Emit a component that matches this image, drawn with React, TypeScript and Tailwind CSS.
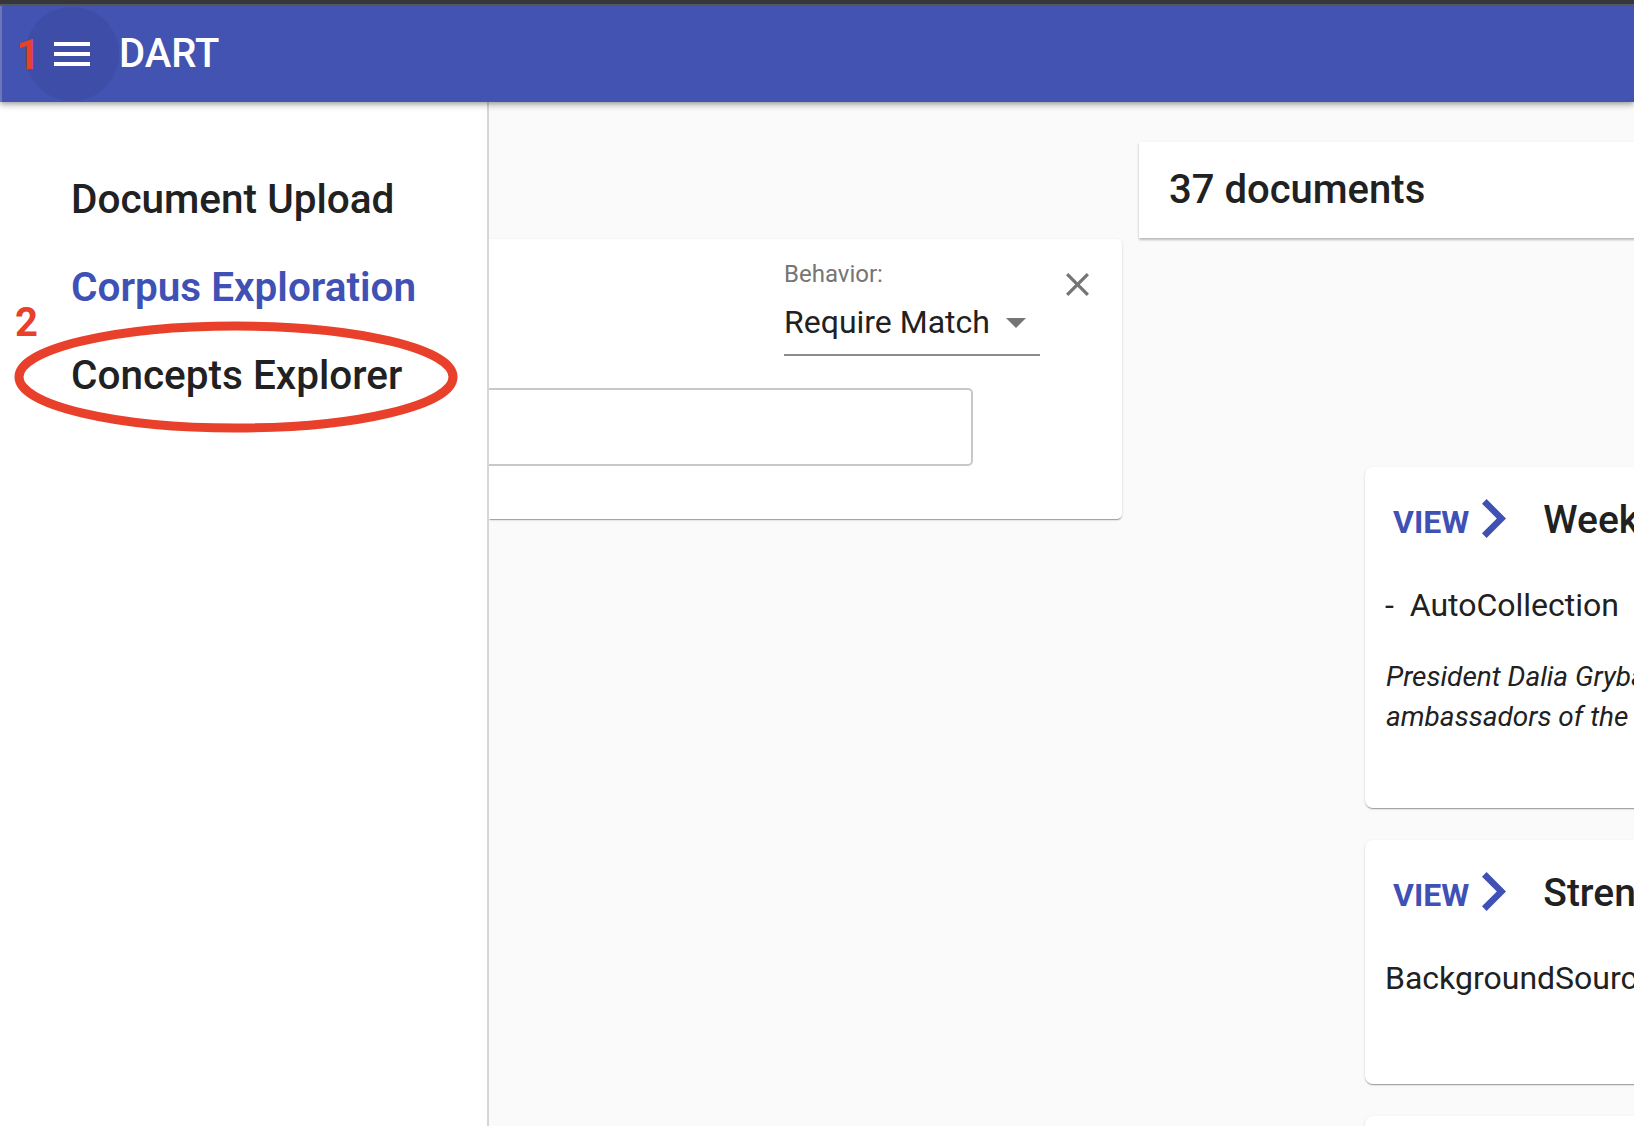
// App.tsx – DART corpus exploration with nav drawer open
import React from "react";

/* ---------- Icons (MUI paths) ---------- */
function MenuIcon() {
  return (
    <svg width="36" height="24" viewBox="3 6 18 12" fill="#ffffff">
      <path d="M3 18h18v-2H3zm0-5h18v-2H3zm0-7v2h18V6z" />
    </svg>
  );
}

function CloseIcon() {
  return (
    <svg width="23" height="23" viewBox="5 5 14 14" fill="#757575">
      <path d="M19 6.41 17.59 5 12 10.59 6.41 5 5 6.41 10.59 12 5 17.59 6.41 19 12 13.41 17.59 19 19 17.59 13.41 12z" />
    </svg>
  );
}

function ArrowDropDown() {
  return (
    <svg width="20" height="10" viewBox="7 10 10 5" fill="#757575">
      <path d="M7 10l5 5 5-5z" />
    </svg>
  );
}

function Chevron() {
  return (
    <svg width="24" height="39" viewBox="8.59 6 7.41 12" fill="#3f51b5">
      <path d="M10 6 8.59 7.41 13.17 12l-4.58 4.59L10 18l6-6z" />
    </svg>
  );
}

/* ---------- Types ---------- */
interface Doc {
  id: string;
  title: string;
  source: string;
  snippet?: string[];
  pb: string;
}

const docs: Doc[] = [
  {
    id: "d1",
    title: "Weekly Review of the President's Activities",
    source: "-  AutoCollection",
    snippet: [
      "President Dalia Grybauskaitė received the credentials of new",
      "ambassadors of the Republic of Lithuania in the Presidential Palace",
    ],
    pb: "pb-[71px]",
  },
  {
    id: "d2",
    title: "Strengthening Regional Security Cooperation",
    source: "BackgroundSource",
    pb: "pb-[86px]",
  },
  {
    id: "d3",
    title: "Defence Ministers Meeting",
    source: "AutoCollection",
    pb: "pb-[86px]",
  },
];

const menu = [
  { label: "Document Upload", active: false },
  { label: "Corpus Exploration", active: true },
  { label: "Concepts Explorer", active: false },
];

/* ---------- Component ---------- */
export default function App() {
  return (
    <div className="h-screen w-screen overflow-hidden flex flex-col bg-[#fafafa] font-['Roboto',sans-serif] text-[#212121]">
      {/* browser chrome strip */}
      <div className="h-[4px] bg-[#37383c] shrink-0" />
      <div className="h-[2px] bg-[#5a5b5e] shrink-0" />

      {/* App bar */}
      <header className="relative z-20 h-[96px] shrink-0 flex items-center pl-[23px] bg-[#4253b1] border-l-2 border-[#6e75b9] shadow-[0_2px_4px_-1px_rgba(0,0,0,0.2),0_4px_5px_0_rgba(0,0,0,0.14),0_1px_10px_0_rgba(0,0,0,0.12)]">
        <div className="w-[94px] h-[94px] rounded-full bg-[#3e4ea8] flex items-center justify-center">
          <MenuIcon />
        </div>
        <span className="text-[40px] leading-[46px] font-medium text-white">DART</span>
        {/* annotation 1 */}
        <span className="absolute left-[14px] top-[28px] text-[42px] leading-[42px] font-bold text-[#e8402a]">
          1
        </span>
      </header>

      <div className="flex flex-1 min-h-0">
        {/* Drawer */}
        <aside className="relative z-10 w-[489px] shrink-0 bg-white border-r-2 border-[#d6d6d6] pt-[53px]">
          {menu.map((m) => (
            <div key={m.label} className="h-[88px] flex items-center pl-[71px]">
              <span
                className={
                  m.active
                    ? "text-[40.5px] leading-[48px] font-semibold text-[#3f51b5]"
                    : "text-[40.5px] leading-[48px] font-medium text-[#212121]"
                }
              >
                {m.label}
              </span>
            </div>
          ))}

          {/* annotation 2 */}
          <span className="absolute left-[15px] top-[201px] text-[40px] leading-[40px] font-bold text-[#e8402a]">
            2
          </span>
          <svg
            className="absolute left-[10px] top-[216px]"
            width="452"
            height="118"
            viewBox="0 0 452 118"
          >
            <ellipse cx="226" cy="59" rx="217" ry="51" fill="none" stroke="#e8402a" strokeWidth="9" />
          </svg>
        </aside>

        {/* Main */}
        <main className="flex-1 min-w-0 flex items-start pt-[40px]">
          {/* filter column */}
          <section className="w-[633px] shrink-0 pt-[97px]">
            <div className="bg-white rounded-r-[5px] flex flex-col pt-[21px] pb-[53px] shadow-[0_2px_1px_-1px_rgba(0,0,0,0.2),0_1px_1px_0_rgba(0,0,0,0.14),0_1px_3px_0_rgba(0,0,0,0.12)]">
              <div className="flex justify-end items-start pr-[33px]">
                <div className="w-[256px] flex flex-col">
                  <span className="text-[24px] leading-[28px] text-[#757575]">Behavior:</span>
                  <div className="mt-[14px] h-[54px] pb-[12px] border-b-2 border-[#8c8c8c] flex items-center justify-between">
                    <span className="text-[32px] leading-[40px]">Require Match</span>
                    <span className="mr-[14px] mt-[2px] flex">
                      <ArrowDropDown />
                    </span>
                  </div>
                </div>
                <div className="ml-[26px] mt-[13px] flex">
                  <CloseIcon />
                </div>
              </div>
              <div className="mt-[32px] mr-[149px] h-[78px] border-2 border-l-0 border-[#c8c8c8] rounded-r-[5px]" />
            </div>
          </section>

          {/* results column */}
          <section className="ml-[17px] flex flex-col shrink-0">
            <div className="w-[900px] h-[96px] shrink-0 bg-white flex items-center pl-[30px] shadow-[0_2px_2px_0_rgba(0,0,0,0.2),0_1px_3px_0_rgba(0,0,0,0.1)]">
              <span className="text-[40px] leading-[46px] font-medium">37 documents</span>
            </div>

            <div className="ml-[226px] mt-[229px] shrink-0 flex flex-col gap-[32px]">
              {docs.map((d) => (
                <div
                  key={d.id}
                  className={`w-[800px] shrink-0 bg-white rounded-[8px] pt-[30px] ${d.pb} shadow-[0_2px_1px_-1px_rgba(0,0,0,0.2),0_1px_1px_0_rgba(0,0,0,0.14),0_1px_3px_0_rgba(0,0,0,0.12)]`}
                >
                  <div className="h-[46px] flex items-center pl-[28px] whitespace-nowrap">
                    <span className="text-[32px] leading-[40px] font-bold text-[#3f51b5] mt-[4px]">VIEW</span>
                    <span className="ml-[13px] mb-[4px] flex">
                      <Chevron />
                    </span>
                    <span className="ml-[37px] text-[39px] leading-[46px] font-medium">{d.title}</span>
                  </div>
                  <div className="mt-[42px] pl-[20px] text-[32px] leading-[40px] whitespace-pre">{d.source}</div>
                  {d.snippet && (
                    <div className="mt-[32px] pl-[21px] text-[28px] leading-[40px] italic whitespace-nowrap">
                      {d.snippet.map((s) => (
                        <div key={s}>{s}</div>
                      ))}
                    </div>
                  )}
                </div>
              ))}
            </div>
          </section>
        </main>
      </div>
    </div>
  );
}
